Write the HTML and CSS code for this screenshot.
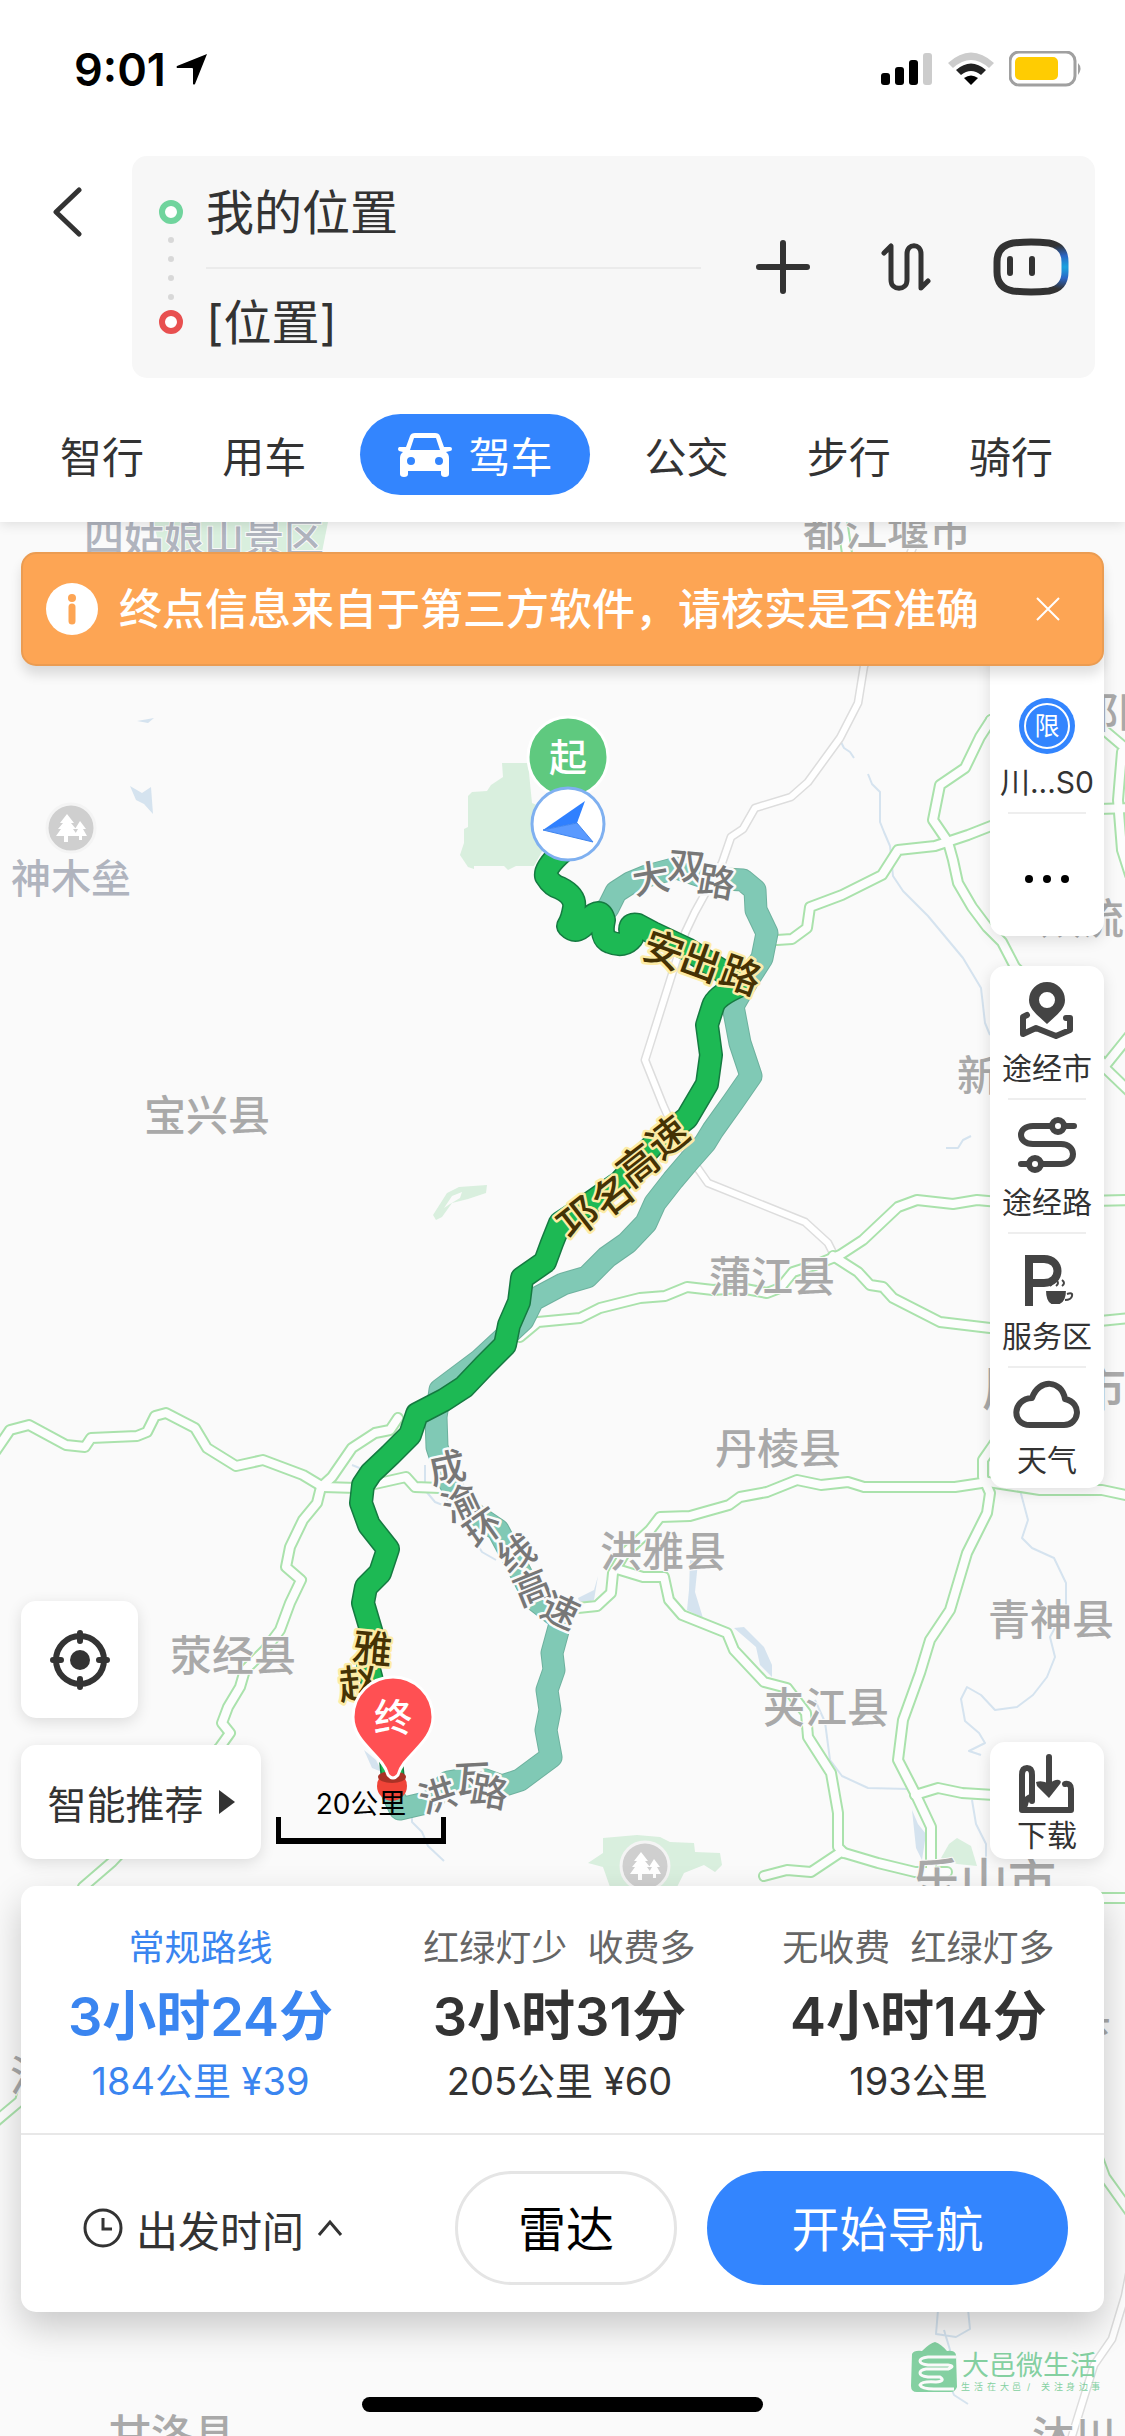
FILE: index.html
```html
<!DOCTYPE html>
<html lang="zh-CN">
<head>
    <meta charset="UTF-8">
    <meta name="viewport" content="width=device-width, initial-scale=1.0">
    <title>驾车路线</title>
    <link rel="stylesheet" href="styles.css">
</head>
<body>

<header class="header">
    <div class="status">
        <span class="time">9:01</span>
        <svg class="locate-arrow" width="32" height="32" viewBox="0 0 32 32"><path d="M31 1 19 31q-1 1-2 0V16q0-1-1-1H1q-1-1 0-2z"/></svg>
        <div class="status-icons">
            <svg width="52" height="34" viewBox="0 0 52 34">
                <rect x="0" y="21" width="9" height="12" rx="3"/>
                <rect x="14" y="15" width="9" height="18" rx="3"/>
                <rect x="28" y="8" width="9" height="25" rx="3"/>
                <rect x="42" y="1" width="9" height="32" rx="3" fill="#ccc"/>
            </svg>
            <svg width="46" height="34" viewBox="0 0 46 34">
                <path d="M0 11Q23-10 46 11l-5 5Q23 0 5 16z" fill="#ccc"/>
                <path d="M8 18q15-13 30 0l-5 5q-10-8-20 0z" fill="#222"/>
                <path d="M16 26q7-5 14 0l-7 7z"/>
            </svg>
            <svg width="74" height="36" viewBox="0 0 74 36">
                <rect x="1" y="1" width="65" height="33" rx="9" fill="#fff" stroke="#a0a0a0" stroke-width="3"/>
                <rect x="6" y="6" width="43" height="23" rx="5" fill="#ffcc02"/>
                <path d="M69 12q5 5 0 12z" fill="#a0a0a0"/>
            </svg>
        </div>
    </div>

    <div class="search">
        <button class="back" aria-label="返回">
            <svg width="30" height="50" viewBox="0 0 30 50"><path d="M27 3 4 25l23 22"/></svg>
        </button>
        <div class="search-box">
            <svg class="search-dots" width="26" height="136" viewBox="0 0 26 136">
                <circle cx="13" cy="13" r="9" fill="#fff" stroke="#70d49d" stroke-width="6"/>
                <g fill="#d8d8d8"><circle cx="13" cy="41" r="3"/><circle cx="13" cy="60" r="3"/><circle cx="13" cy="79" r="3"/><circle cx="13" cy="98" r="3"/></g>
                <circle cx="13" cy="123" r="9" fill="#fff" stroke="#e85050" stroke-width="6"/>
            </svg>
            <div class="search-fields">
                <input type="text" aria-label="起点" value="我的位置">
                <input type="text" aria-label="终点" value="[位置]">
            </div>
            <div class="search-actions">
                <button aria-label="添加途经点">
                    <svg width="56" height="56" viewBox="0 0 56 56"><path d="M28 4v48M4 28h48"/></svg>
                </button>
                <button aria-label="交换起终点">
                    <svg width="50" height="50" viewBox="0 0 50 50" class="thin"><path d="m3 11 7-7v34c0 11 16 11 16 0V12C26 1 40 1 40 12v34l7-7"/></svg>
                </button>
                <button aria-label="语音助手">
                    <svg width="76" height="58" viewBox="0 0 76 58">
                        <defs>
                            <radialGradient id="glow" cx="1" cy=".5" r=".45">
                                <stop offset="0" stop-color="#19a5e0"/>
                                <stop offset=".5" stop-color="#2c66c4"/>
                                <stop offset="1" stop-color="#333"/>
                            </radialGradient>
                        </defs>
                        <path d="M20 5q18-2 36 0 16 3 16 19v10q0 16-16 19-18 2-36 0Q4 50 4 34V24Q4 8 20 5z" stroke="url(#glow)" stroke-width="7"/>
                        <path d="M17 21v14M39 21v14"/>
                    </svg>
                </button>
            </div>
        </div>
    </div>

    <nav class="tabs">
        <a href="#">智行</a>
        <a href="#">用车</a>
        <a href="#" class="active">
            <svg width="54" height="44" viewBox="0 0 54 44">
                <path fill="#fff" fill-rule="evenodd" d="M12 3q1-3 5-3h20q4 0 5 3l4 11h6q2 0 2 2t-2 2l-4 1q3 2 3 6v16q0 3-4 3t-4-3v-3H10v3q0 3-4 3t-4-3V25q0-4 3-6l-4-1q-2-2 0-4h7zm4 2-4 12h30L38 5zM13 24a4 4 0 1 0 0 8 4 4 0 0 0 0-8zm28 0a4 4 0 1 0 0 8 4 4 0 0 0 0-8z"/>
            </svg>
            驾车
        </a>
        <a href="#">公交</a>
        <a href="#">步行</a>
        <a href="#">骑行</a>
    </nav>
</header>

<main class="map">
    <svg class="map-canvas" viewBox="0 522 1125 1914" preserveAspectRatio="xMidYMin slice">
        <defs>
            <g id="local-roads">
                <path d="M920 530 864 666 858 703 840 738 808 782 791 797 755 808 743 829 731 837 722 863 695 912 685 933 645 1060 663 1105 680 1143 708 1183 805 1222 828 1243 833 1253"/>
                <path d="M1130 2270 1125 2296 1112 2339 1094 2365 1072 2436"/>
            </g>
            <g id="highways">
                <path d="M842 520 848 560"/>
                <path d="M991 720 980 737 965 768 940 785 933 820 948 842 953 860 958 883 972 907 987 927 1002 942 1015 967 1060 1010 1105 1066 1130 1035"/>
                <path d="M777 940 792 939 807 928 810 907 842 895 882 875 898 850 935 846 968 835 991 826 1060 810 1130 808"/>
                <path d="M991 720 1050 700 1104 730 1130 752"/>
                <path d="M1122 752 1118 800 1122 850 1130 875M1105 1068 1130 1092"/>
                <path d="M520 1337 538 1322 580 1318 600 1308 640 1298 665 1296 687 1287 713 1290 740 1288 767 1293 780 1288 793 1272 815 1265 840 1255 863 1240 898 1207 917 1200 953 1204 977 1200 1010 1203 1130 1200"/>
                <path d="M833 1256 858 1272 870 1285 883 1287 893 1298 940 1322 990 1328 1060 1325 1130 1318"/>
                <path d="M-5 1452 10 1430 29 1425 66 1445 85 1447 91 1438 137 1436 147 1432 155 1416 166 1413 195 1428 207 1448 236 1466 263 1460 303 1475 323 1487 357 1488 406 1477 415 1487 440 1488"/>
                <path d="M398 1418 390 1430 375 1433 352 1448 332 1477 321 1487 317 1503 303 1520 290 1547 286 1567 301 1580 290 1603 280 1630 265 1650 245 1670 240 1687 228 1707 222 1723 230 1733 220 1747 112 1862 83 1887 20 2101-5 2122"/>
                <path d="M578 1608 597 1606 611 1593 613 1573 625 1553 650 1530 660 1517 690 1516 704 1512 729 1505 740 1497 767 1492 797 1480 821 1485 848 1482 864 1487 955 1487 988 1482 1040 1490 1102 1490 1130 1496"/>
                <path d="M1000 1435 992 1447 983 1460 983 1477 990 1493 987 1513 967 1553 950 1610 930 1640 920 1673 903 1720 898 1760 915 1793 931 1827 931 1872"/>
                <path d="M620 1570 643 1577 664 1577 669 1600 682 1615 727 1633 734 1650 764 1682 787 1688 806 1713 808 1737 831 1773 838 1813 838 1847 844 1853"/>
                <path d="M764 1876 787 1870 811 1872 841 1852 878 1863 915 1872 947 1872"/>
                <path d="M915 1795 938 1788 962 1793 1040 1798M1095 1898 1130 1898M1095 2150 1105 2177 1130 2212"/>
            </g>
            <path id="alt-route" d="M598 915 608 908 616 892 630 883 647 876 677 868 707 878 743 880 755 890 756 910 767 933 762 958 748 980 733 1006 740 1043 751 1076 733 1102 713 1130 705 1143 690 1160 673 1180 655 1203 646 1223 627 1243 607 1257 587 1277 563 1284 533 1300 523 1320 480 1360 440 1390 436 1417 437 1447 448 1480 464 1507 498 1530 514 1560 535 1600 561 1620 552 1653 554 1670 547 1690 550 1710 546 1730 551 1757 520 1780 502 1786 477 1777 448 1782 430 1802 400 1809 393 1795"/>
            <path id="main-route" d="M562 852Q544 868 546 876 552 886 560 888 576 896 574 908T568 926Q578 936 588 920 600 906 604 920 600 938 610 942 624 948 632 938 626 922 638 925L653 933 687 949 727 974 739 986Q716 996 713 1006L707 1025 711 1055 707 1084 687 1118 653 1145 620 1182 580 1210 560 1223 552 1243 545 1262 522 1278 519 1302 509 1325 505 1345 484 1366 464 1387 444 1400 417 1414 410 1435 390 1455 371 1473 363 1485 361 1503 369 1525 388 1549 380 1573 366 1587 363 1603 373 1637 368 1665 390 1750 393 1780"/>
            <g id="park">
                <circle r="24" fill="#cfcfcf" stroke="#f4f4f4" stroke-width="3"/>
                <path fill="#fff" d="M-4-14l7 9h-3l5 6h-3l5 7H-3v6h-4V8h-8l5-7h-3l5-6h-3zM9-7l6 8h-3l4 7h-5v4H8V8H3l4-7H4z"/>
            </g>
        </defs>

        <rect class="land" y="522" width="1125" height="1914"/>

        <g class="green">
            <path d="M154 522h174l-6 30H160z"/>
            <path d="M502 763h26l4 40 12 5v40l-10 18h-18l-8 4-4-4h-30v3l-6-2-8-12 4-12v-14l4-2v-31l4-4 15-1 4-6 12-8z"/>
            <path fill-rule="evenodd" d="M433 1215l14-22 12-6 28-2-1 8-18 6-16 4-10 14-6 3zM444 1208l8-12 10-4-2 6-10 6z"/>
            <path d="M588 1863l15-10v-15l34-3 23 2 10 5 24 1 1 9 25 1 2 12-7 7-11-7-20 8-7 14h-67l-7-20z"/>
            <path d="M941 1858l8-14 8-6 14 8 6 20-20-2z"/>
        </g>

        <g class="river">
            <path d="M840 740l4 8 6 4 4 6M868 774l4 10 8 8v30l4 10 6 14 3 30 10 15 25 25 35 42 18 30 4 35 5 12"/>
            <path d="M946 1148h12l5-8 8-4"/>
            <path d="M425 1465v25l10 12 25 10 10 20 12 20 14 8M352 1465l10 4"/>
            <path d="M1020 1490l8 30-6 18 10 10 22 10 12 25v24"/>
            <path d="M1066 1607l-16 30 5 20-8 20-14 18-16 12-22 3-14-15-14-8-6 12 4 22 14 12 6 10-16 8 12 4"/>
            <path d="M815 1700l10 22 5 38 12 16 26 12 40 1"/>
            <path d="M972 1800l4 24 10 20v45M915 1890h70"/>
            <path d="M412 1810v12l10 10 6 14 16 15M938 2310l-2 24 20 3 14-8-2-20M944 2330l6 20-4 25 8 20 14 9"/>
        </g>
        <g class="water">
            <path d="M690 1560l8 2-3 30 8 26-16-8 2-20z"/>
            <path d="M734 1628l10-1 20 20 8 18v12l-12-12-4-18z"/>
            <path d="M912 1810l6 14 8 10-4 26-6-12z"/>
            <path d="M130 786l12 7 9-6 2 27-9-10-8-4zM137 721l17-3-6 5z"/>
            <path d="M364 1750l12 10 6 12-10-4z"/>
            <path d="M578 1598l16-8 4-14-4 24-14 4z"/>
        </g>

        <use href="#local-roads" class="local-edge"/>
        <use href="#local-roads" class="local-fill"/>
        <use href="#highways" class="highway-edge"/>
        <use href="#highways" class="highway-fill"/>

        <g class="places">
            <text class="sight" x="84" y="552">四姑娘山景区</text>
            <text x="803" y="546">都江堰市</text>
            <text x="1076" y="728">都区</text>
            <text x="1040" y="934">双流</text>
            <text class="sight" x="11" y="893">神木垒</text>
            <text x="144" y="1131">宝兴县</text>
            <text x="957" y="1091">新津</text>
            <text x="709" y="1292">蒲江县</text>
            <text class="city" x="982" y="1406">眉山市</text>
            <text x="715" y="1464">丹棱县</text>
            <text x="600" y="1567">洪雅县</text>
            <text x="988" y="1635">青神县</text>
            <text x="170" y="1671">荥经县</text>
            <text x="763" y="1723">夹江县</text>
            <text class="city" x="912" y="1898">乐山市</text>
            <text x="1069" y="2031">县</text>
            <text x="10" y="2091">汉</text>
            <text x="109" y="2450">甘洛县</text>
            <text x="1032" y="2452">沐川</text>
        </g>
        <use href="#park" x="71" y="828"/>
        <use href="#park" x="645" y="1866"/>

        <use href="#alt-route" class="alt-edge"/>
        <use href="#alt-route" class="alt-fill"/>
        <use href="#main-route" class="main-edge"/>
        <use href="#main-route" class="main-fill"/>

        <g class="alt-names">
            <text x="635 667 696" y="895 878 892" rotate="-10 5 10">大双路</text>
            <text x="432 450 476 507 520 538" y="1485 1523 1550 1574 1607 1615" rotate="-12 -25 -35 -30 -22 25">成渝环线高速</text>
            <text x="424 455 469" y="1814 1793 1802" rotate="-18 -3 10">洪瓦路</text>
        </g>
        <g class="main-names">
            <text x="640 677 717" y="957 969 982" rotate="20 20 20">安出路</text>
            <text x="571 606 631 661" y="1242 1219 1189 1161" rotate="-38 -38 -38 -38">邛名高速</text>
            <text x="351 340" y="1662 1700" rotate="5 -5">雅赵</text>
        </g>

        <g class="pin">
            <circle cx="568" cy="757" r="40" fill="#5fc97f"/>
            <text x="568" y="771">起</text>
        </g>
        <circle cx="568" cy="824" r="36" fill="#fff" stroke="#7fb0f0" stroke-width="3"/>
        <path d="M543 830 585 801 577 823z" fill="#2f80ff"/>
        <path d="M543 830 577 823 593 842z" fill="#5a9aff" stroke="#3f85ee"/>

        <ellipse cx="392" cy="1786" rx="15" ry="15" fill="#f04438"/>
        <ellipse cx="392" cy="1777" rx="14" ry="6" fill="#a93226"/>
        <g class="pin">
            <path d="M393 1677a40 40 0 0 1 40 40c0 26-30 38-35 58q-5 6-10 0c-5-20-35-32-35-58a40 40 0 0 1 40-40z" fill="#ff5053"/>
            <text x="393" y="1731">终</text>
        </g>

        <g class="watermark">
            <path d="M912 2354q2-4 10-3 8-8 13-9 6 2 12 9 8-1 9 4l1 32q-2 5-6 5h-34q-6 0-6-6z"/>
            <path class="wave" d="M956 2357h-28q-8 1-8 4t8 4h20q8 1 0 4h-22q-6 1-6 4t8 4h12q6 4-4 5-14-1-16 3 2 4 14 4h20"/>
            <text x="962" y="2375">大邑微生活</text>
            <text class="slogan" x="961 974 987 1000 1012 1027 1041 1054 1066 1079 1091" y="2390">生活在大邑/关注身边事</text>
        </g>
    </svg>

    <div class="map-ui">
        <div class="notice">
            <svg width="54" height="54" viewBox="0 0 54 54">
                <circle cx="27" cy="27" r="26" fill="#fff"/>
                <circle cx="27" cy="16" r="4" fill="#fda554"/>
                <path d="M27 25v14" stroke="#fda554" stroke-width="7" stroke-linecap="round"/>
            </svg>
            <p>终点信息来自于第三方软件，请核实是否准确</p>
            <button aria-label="关闭">
                <svg width="28" height="28" viewBox="0 0 28 28"><path d="m3 3 22 22M25 3 3 25"/></svg>
            </button>
        </div>

        <div class="controls">
            <div class="controls-left">
                <button class="card locate" aria-label="定位">
                    <svg width="60" height="60" viewBox="0 0 60 60">
                        <circle cx="30" cy="30" r="24" fill="none" stroke="#333" stroke-width="6"/>
                        <circle cx="30" cy="30" r="10" fill="#333"/>
                        <path d="M30 3v8M30 49v8M3 30h8M49 30h8" stroke="#333" stroke-width="6" stroke-linecap="round"/>
                    </svg>
                </button>
                <div class="controls-bottom">
                    <button class="card recommend">智能推荐 <span class="triangle"></span></button>
                    <div class="scale">20公里</div>
                </div>
            </div>

            <div class="controls-right">
                <div class="card tools limit">
                    <button>
                        <svg width="56" height="56" viewBox="0 0 56 56">
                            <circle cx="28" cy="28" r="28" fill="#3385fe"/>
                            <circle cx="28" cy="28" r="22" fill="none" stroke="#fff" stroke-width="2"/>
                            <text x="28" y="37" font-size="25" text-anchor="middle" fill="#fff">限</text>
                        </svg>
                        川...S0
                    </button>
                    <button class="more" aria-label="更多">
                        <svg width="46" height="10" viewBox="0 0 46 10"><circle cx="5" cy="5" r="4"/><circle cx="23" cy="5" r="4"/><circle cx="41" cy="5" r="4"/></svg>
                    </button>
                </div>
                <div class="card tools">
                    <button>
                        <svg width="60" height="60" viewBox="0 0 60 60">
                            <path fill="#444" fill-rule="evenodd" d="M30 2a18 18 0 0 1 18 18c0 10-10 16-18 24-8-8-18-14-18-24A18 18 0 0 1 30 2zm0 10a8 8 0 1 0 0 16 8 8 0 0 0 0-16z"/>
                            <path class="line" d="m10 35-4 2v17l13-6 20 8 14-6V38h-4"/>
                        </svg>
                        途经市
                    </button>
                    <button>
                        <svg width="60" height="60" viewBox="0 0 60 60">
                            <path class="line" d="M57 12H16C0 12 0 30 16 30h28c16 0 16 20 0 20H4"/>
                            <circle class="line" cx="41" cy="12" r="6"/>
                            <circle class="line" cx="18" cy="50" r="6"/>
                        </svg>
                        途经路
                    </button>
                    <button>
                        <svg width="60" height="60" viewBox="0 0 60 60">
                            <path d="M12 58V11h15c18 0 18 24 0 24H14" fill="none" stroke="#444" stroke-width="8"/>
                            <path d="M28 42h22q0 12-7 15h-9q-6-3-6-15z" fill="#444" stroke="#fff" stroke-width="2"/>
                            <path d="M50 46q6-2 5 2-1 4-7 4M33 38q4-3 0-6M39 38q4-3 0-6M45 38q4-3 0-6" fill="none" stroke="#444" stroke-width="2"/>
                        </svg>
                        服务区
                    </button>
                    <button>
                        <svg width="68" height="56" viewBox="0 0 68 56">
                            <path class="line" d="M17 49C-2 49-1 23 19 22 26 2 49 4 52 23c18 4 14 26-1 26z"/>
                        </svg>
                        天气
                    </button>
                </div>
                <button class="card download">
                    <svg width="60" height="62" viewBox="0 0 60 62">
                        <path class="line" d="M48 31q6-1 6 5v21H5V22q0-7 5-7t5 7v26M32 4v33"/>
                        <path fill="#444" d="M19 29q7-2 13 2 6-5 10-4 3 1 1 4L32 45 20 33z"/>
                        <path class="line" d="M8 52q1-8 7-8"/>
                    </svg>
                    下载
                </button>
            </div>
        </div>

        <section class="sheet">
            <div class="routes">
                <button class="route selected">
                    <span class="route-label">常规路线</span>
                    <span class="route-time">3小时24分</span>
                    <span class="route-info">184公里 ¥39</span>
                </button>
                <button class="route">
                    <span class="route-label">红绿灯少&nbsp; 收费多</span>
                    <span class="route-time">3小时31分</span>
                    <span class="route-info">205公里 ¥60</span>
                </button>
                <button class="route">
                    <span class="route-label">无收费&nbsp; 红绿灯多</span>
                    <span class="route-time">4小时14分</span>
                    <span class="route-info">193公里</span>
                </button>
            </div>
            <div class="actions">
                <button class="depart">
                    <svg width="42" height="42" viewBox="0 0 42 42"><circle cx="21" cy="21" r="18"/><path d="M21 11v11h9"/></svg>
                    出发时间
                    <svg width="28" height="20" viewBox="0 0 28 20"><path d="M3 17 14 4l11 13"/></svg>
                </button>
                <button class="radar">雷达</button>
                <button class="start">开始导航</button>
            </div>
        </section>

        <div class="home-bar"></div>
    </div>
</main>

</body>
</html>
```

FILE: styles.css
```css
* {
    box-sizing: border-box;
}
body {
    margin: 0;
    min-height: 100vh;
    display: flex;
    flex-direction: column;
    font-family: Inter, "Noto Sans CJK SC", sans-serif;
    color: #333;
    background: #fff;
}
button {
    font: inherit;
    color: inherit;
    background: none;
    border: none;
    padding: 0;
    cursor: pointer;
}
a {
    color: inherit;
    text-decoration: none;
}
svg {
    display: block;
    flex: none;
}

/* header */
.header {
    position: relative;
    z-index: 1;
    box-shadow: 0 2px 12px rgba(0, 0, 0, 0.12);
    background: #fff;
}
.status {
    display: flex;
    align-items: center;
    height: 138px;
    padding: 0 42px 0 74px;
    color: #000;
}
.time {
    font-size: 45px;
    font-weight: 600;
}
.locate-arrow {
    margin-left: 10px;
}
.status-icons {
    display: flex;
    align-items: center;
    gap: 15px;
    margin-left: auto;
}
.search {
    display: flex;
    align-items: flex-start;
    padding: 18px 30px 0 52px;
}
.back {
    margin: 31px 50px 0 0;
}
.back svg,
.search-actions svg {
    fill: none;
    stroke: #333;
    stroke-width: 6;
    stroke-linecap: round;
    stroke-linejoin: round;
}
.back svg {
    stroke-width: 5;
}
.search-actions .thin {
    stroke-width: 5;
}
.search-box {
    flex: 1;
    display: flex;
    align-items: center;
    height: 222px;
    padding: 0 26px;
    border-radius: 15px;
    background: #f7f7f7;
}
.search-fields {
    flex: 1;
    min-width: 0;
    margin-left: 22px;
}
.search-fields input {
    display: block;
    width: 100%;
    height: 111px;
    padding: 0 0 6px;
    border: none;
    background: none;
    font: inherit;
    font-size: 48px;
    color: #333;
    outline: none;
}
.search-fields input + input {
    padding-bottom: 10px;
    border-top: 2px solid #ebebeb;
}
.search-actions {
    display: flex;
    align-items: center;
    gap: 62px;
    margin-left: 54px;
}
.search-actions button:first-child {
    margin-right: 8px;
}
.tabs {
    display: flex;
    justify-content: space-between;
    align-items: center;
    height: 144px;
    padding: 9px 72px 0 60px;
    font-size: 42px;
}
.tabs a {
    white-space: nowrap;
}
.tabs .active {
    display: flex;
    align-items: center;
    gap: 16px;
    height: 81px;
    margin: 0 -24px;
    padding: 0 38px;
    border-radius: 41px;
    color: #fff;
    background: #3385fe;
}

/* map drawing */
.map {
    position: relative;
    flex: 1;
    display: flex;
    overflow: hidden;
}
.map-canvas {
    position: absolute;
    inset: 0;
    width: 100%;
    height: 100%;
}
.map-canvas path {
    stroke-linejoin: round;
}
.land {
    fill: #fafafa;
}
.green {
    fill: #d9efde;
}
.river {
    fill: none;
    stroke: #d5e3ef;
    stroke-width: 2;
}
.water {
    fill: #d5e3ef;
}
.local-edge,
.local-fill,
.highway-edge,
.highway-fill,
.alt-edge,
.alt-fill,
.main-edge,
.main-fill {
    fill: none;
    stroke-linecap: round;
}
.local-edge {
    stroke: #ddd;
    stroke-width: 9;
}
.local-fill {
    stroke: #fff;
    stroke-width: 6;
}
.highway-edge {
    stroke: #aae2ac;
    stroke-width: 12;
}
.highway-fill {
    stroke: #fdfdfd;
    stroke-width: 8;
}
.alt-edge {
    stroke: #6db19e;
    stroke-width: 23;
}
.alt-fill {
    stroke: #80c9b5;
    stroke-width: 21;
}
.main-edge {
    stroke: #157a41;
    stroke-width: 24;
}
.main-fill {
    stroke: #1db954;
    stroke-width: 21;
}
.places {
    font-size: 42px;
    font-weight: 500;
    fill: #a9a9a9;
    stroke: #fafafa;
    stroke-width: 2;
    paint-order: stroke;
}
.places .sight {
    font-size: 40px;
    fill: #b0b4be;
}
.places .city {
    font-size: 48px;
}
.alt-names,
.main-names {
    font-size: 37px;
    font-weight: 500;
    fill: #777;
    stroke: #fafafa;
    stroke-width: 5;
    stroke-linejoin: round;
    paint-order: stroke;
}
.main-names {
    font-size: 40px;
    fill: #453204;
    stroke: #fdeca6;
}
.pin {
    font-size: 38px;
    font-weight: 500;
    text-anchor: middle;
}
.pin circle,
.pin path {
    stroke: #fff;
    stroke-width: 3;
}
.pin text {
    fill: #fff;
}
.watermark {
    font-size: 27px;
    fill: #84d0a1;
}
.watermark .wave {
    fill: none;
    stroke: #fafafa;
    stroke-width: 3;
}
.watermark .slogan {
    font-size: 9px;
}

/* controls over the map */
.map-ui {
    position: relative;
    flex: 1;
    display: flex;
    flex-direction: column;
    padding: 30px 21px 24px;
}
.notice {
    position: relative;
    z-index: 1;
    display: flex;
    align-items: center;
    height: 114px;
    padding: 0 40px 0 22px;
    border: 2px solid #eb9c52;
    border-radius: 15px;
    color: #fff;
    background: #fda554;
    box-shadow: 0 9px 12px rgba(0, 0, 0, 0.12);
}
.notice p {
    flex: 1;
    margin: 0 0 0 20px;
    font-size: 43px;
    font-weight: 500;
    line-height: 60px;
    white-space: nowrap;
}
.notice button svg {
    stroke: #fff;
    stroke-width: 2;
}
.controls {
    flex: 1;
    display: flex;
    justify-content: space-between;
    padding-bottom: 27px;
}
.card {
    border-radius: 15px;
    background: #fff;
    box-shadow: 0 4px 15px rgba(0, 0, 0, 0.12);
}
.controls-left {
    display: flex;
    flex-direction: column;
    justify-content: flex-end;
    gap: 27px;
}
.locate {
    display: flex;
    align-items: center;
    justify-content: center;
    width: 117px;
    height: 117px;
}
.controls-bottom {
    display: flex;
    align-items: flex-end;
    gap: 15px;
}
.recommend {
    display: flex;
    align-items: center;
    justify-content: center;
    gap: 15px;
    width: 240px;
    height: 114px;
    font-size: 39px;
}
.triangle {
    border-left: 16px solid #333;
    border-top: 12px solid transparent;
    border-bottom: 12px solid transparent;
}
.scale {
    width: 170px;
    height: 57px;
    margin-bottom: 15px;
    font-size: 28px;
    line-height: 34px;
    text-align: center;
    color: #000;
    background:
        linear-gradient(#000, #000) left bottom / 5px 27px no-repeat,
        linear-gradient(#000, #000) right bottom / 5px 27px no-repeat,
        linear-gradient(#000, #000) left bottom / 100% 6px no-repeat;
}
.controls-right {
    display: flex;
    flex-direction: column;
    gap: 30px;
    width: 114px;
    margin-top: -60px;
}
.tools,
.download {
    font-size: 30px;
    line-height: 40px;
}
.tools button {
    display: flex;
    flex-direction: column;
    align-items: center;
    justify-content: flex-end;
    gap: 8px;
    width: 100%;
    height: 134px;
    padding-bottom: 12px;
    white-space: nowrap;
    background: linear-gradient(#eee, #eee) center bottom / 78px 2px no-repeat;
}
.tools button:last-child {
    height: 120px;
    padding-bottom: 8px;
    background: none;
}
.limit button:first-child {
    height: 208px;
}
.tools .more:last-child {
    justify-content: center;
    height: 122px;
    padding: 8px 0 0;
}
.line {
    fill: none;
    stroke: #444;
    stroke-width: 6;
    stroke-linecap: round;
    stroke-linejoin: round;
}
circle.line {
    fill: #fff;
}
.download {
    display: flex;
    flex-direction: column;
    align-items: center;
    justify-content: flex-end;
    height: 117px;
    padding-bottom: 4px;
    margin-top: auto;
}

/* bottom sheet */
.sheet {
    border-radius: 15px;
    background: #fff;
    box-shadow: 0 15px 36px rgba(0, 0, 0, 0.2);
}
.routes {
    display: grid;
    grid-template-columns: repeat(3, 1fr);
    padding: 40px 6px 30px 0;
    border-bottom: 2px solid #e8e8e8;
}
.route {
    display: flex;
    flex-direction: column;
    align-items: center;
    font-size: 38px;
    line-height: 44px;
    white-space: nowrap;
}
.route-label {
    font-size: 36px;
    color: #666;
}
.route-time {
    margin: 14px 0 9px;
    font-size: 54px;
    font-weight: 600;
    line-height: 66px;
}
.selected,
.selected .route-label {
    color: #3a85f0;
}
.actions {
    display: flex;
    align-items: center;
    padding: 36px 36px 27px 61px;
}
.actions button {
    white-space: nowrap;
}
.depart {
    display: flex;
    align-items: center;
    gap: 12px;
    margin-right: auto;
    font-size: 42px;
}
.depart svg {
    fill: none;
    stroke: #333;
    stroke-width: 3;
}
.radar,
.start {
    height: 114px;
    padding-bottom: 4px;
    border-radius: 57px;
    font-size: 48px;
}
.radar {
    width: 222px;
    margin-right: 30px;
    border: 3px solid #e5e5e5;
    color: #000;
}
.start {
    width: 361px;
    color: #fff;
    background: #3385fe;
}
.home-bar {
    width: 401px;
    height: 15px;
    margin: 85px auto 0;
    border-radius: 8px;
    background: #000;
}
```
